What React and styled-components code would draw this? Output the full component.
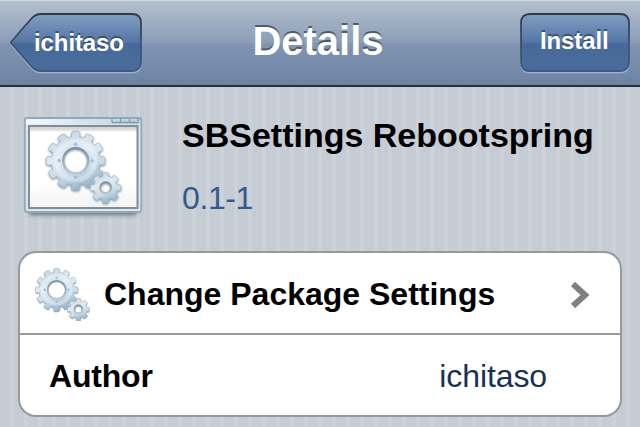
import React from 'react';
import styled, { createGlobalStyle } from 'styled-components';

const GlobalStyle = createGlobalStyle`
  * {
    box-sizing: border-box;
  }
  body {
    margin: 0;
    overflow: hidden;
    font-family: "Liberation Sans", Arial, sans-serif;
  }
`;

const Screen = styled.div`
  width: 640px;
  height: 427px;
  overflow: hidden;
  background: repeating-linear-gradient(90deg, #c5ccd4 0 10px, #cbd2d8 10px 14px);
`;

const NavBar = styled.header`
  display: flex;
  justify-content: space-between;
  align-items: flex-start;
  height: 87px;
  padding: 13px 10px 0;
  border-top: 1px solid #cdd5da;
  border-bottom: 2px solid #2d3033;
  background: linear-gradient(#b3bfcc 0, #8b9db7 42px, #8195b2 42px, #6d83a4 84px);
`;

const NavTitle = styled.h1`
  margin: 4px 28px 0 0;
  padding-left: 2px;
  font-size: 40px;
  line-height: 46px;
  color: #fff;
  text-shadow: 0 -2px 0 #4d5a6c;
`;

const NavButton = styled.button`
  position: relative;
  width: ${props => props.width};
  height: 59px;
  margin-top: -1px;
  padding: 0;
  border: 0;
  background: none;
  color: #fff;
  font: bold 24px/28px "Liberation Sans", Arial, sans-serif;
`;

const ButtonShape = styled.svg`
  position: absolute;
  inset: 0;
`;

const ButtonLabel = styled.span`
  position: relative;
  display: block;
  padding-left: ${props => props.indent};
  margin-top: ${props => props.offset};
  text-align: left;
  letter-spacing: -0.1px;
  text-shadow: 0 -2px 0 #3c526f;
`;

const PackageHeader = styled.section`
  display: flex;
  height: 164px;
  padding: 28px 0 0 20px;
`;

const PackageInfo = styled.div`
  padding-left: 32px;
`;

const PackageName = styled.h2`
  margin: 0;
  font-size: 34px;
  line-height: 40px;
  white-space: nowrap;
  color: #000;
`;

const Version = styled.p`
  margin: 25px 0 0;
  font-size: 32px;
  line-height: 36px;
  letter-spacing: -0.4px;
  color: #36598f;
`;

const List = styled.ul`
  width: 604px;
  height: 166px;
  margin: 0 0 0 18px;
  padding: 0;
  list-style: none;
  background: #fff;
  border: 2px solid #999;
  border-radius: 18px;
`;

const ListRow = styled.li`
  display: flex;
  align-items: center;
  height: ${props => props.height};
  padding: ${props => props.inset};

  & + & {
    border-top: 2px solid #999;
  }
`;

const RowLabel = styled.span`
  flex: 1;
  padding-bottom: ${props => props.lift};
  font-size: 32px;
  font-weight: bold;
  line-height: 36px;
  letter-spacing: ${props => props.spacing};
  white-space: nowrap;
`;

const RowValue = styled.span`
  font-size: 32px;
  line-height: 36px;
  letter-spacing: -0.1px;
  color: #1a3252;
`;

const RowIcon = styled.span`
  display: flex;
  width: 69px;
`;

function gearPath(cx, cy, outer, inner, hole, teeth) {
  const step = (Math.PI * 2) / teeth;
  const point = (r, a) => `${(cx + r * Math.sin(a)).toFixed(2)} ${(cy - r * Math.cos(a)).toFixed(2)}`;
  let d = '';
  for (let i = 0; i < teeth; i += 1) {
    const a = i * step;
    d += `${i ? 'L' : 'M'}${point(inner, a - step * 0.3)}`;
    d += `L${point(outer - 2, a - step * 0.3)}`;
    d += `Q${point(outer, a - step * 0.27)} ${point(outer, a - step * 0.16)}`;
    d += `L${point(outer, a + step * 0.16)}`;
    d += `Q${point(outer, a + step * 0.27)} ${point(outer - 2, a + step * 0.3)}`;
    d += `L${point(inner, a + step * 0.3)}`;
  }
  d += `ZM${cx + hole} ${cy}A${hole} ${hole} 0 1 0 ${cx - hole} ${cy}A${hole} ${hole} 0 1 0 ${cx + hole} ${cy}Z`;
  return d;
}

const BIG_GEAR = gearPath(30, 30, 29.5, 24.5, 12, 12);
const SMALL_GEAR = gearPath(60, 57, 15.3, 12, 5, 8);

function GearShapes({ id }) {
  return (
    <g>
      <defs>
        <linearGradient id={`${id}-metal`} x1="0.2" y1="0" x2="0.6" y2="1">
          <stop offset="0" stopColor="#c3d5e1" />
          <stop offset="0.4" stopColor="#e0ebf3" />
          <stop offset="0.7" stopColor="#c9dbe8" />
          <stop offset="1" stopColor="#94b0c6" />
        </linearGradient>
        <linearGradient id={`${id}-rim`} x1="0" y1="0" x2="0" y2="1">
          <stop offset="0" stopColor="#7c8f9e" />
          <stop offset="1" stopColor="#b4c8d6" />
        </linearGradient>
        <filter id={`${id}-shadow`} x="-10%" y="-10%" width="120%" height="125%">
          <feDropShadow dx="0" dy="1" stdDeviation="0.9" floodColor="#465b6c" floodOpacity="0.7" />
        </filter>
      </defs>
      <g fill={`url(#${id}-metal)`} fillRule="evenodd" stroke="#a0b6c6" strokeWidth="0.7" filter={`url(#${id}-shadow)`}>
        <path d={BIG_GEAR} />
        <path d={SMALL_GEAR} />
      </g>
      <circle cx="30" cy="30" r="19" fill="none" stroke="#f1f7fb" strokeWidth="5" opacity="0.4" />
      <circle cx="30" cy="30" r="12.6" fill="none" stroke={`url(#${id}-rim)`} strokeWidth="2.2" />
      <circle cx="60" cy="57" r="5.6" fill="none" stroke={`url(#${id}-rim)`} strokeWidth="2" />
      <g fill="#a7bfd2">
        <circle cx="30" cy="13.5" r="1.8" />
        <circle cx="46.5" cy="30" r="1.8" />
        <circle cx="30" cy="46.5" r="1.8" />
        <circle cx="13.5" cy="30" r="1.8" />
      </g>
    </g>
  );
}

function Gears() {
  return (
    <svg width="55" height="53" viewBox="0 0 76 73">
      <GearShapes id="row" />
    </svg>
  );
}

function PackageIcon() {
  return (
    <svg width="130" height="112" viewBox="0 0 130 112">
      <defs>
        <linearGradient id="pane" x1="0" y1="0" x2="0" y2="1">
          <stop offset="0" stopColor="#ced1d4" />
          <stop offset="0.05" stopColor="#dddfe1" />
          <stop offset="0.07" stopColor="#fff" />
          <stop offset="0.7" stopColor="#fff" />
          <stop offset="1" stopColor="#f2f2f3" />
        </linearGradient>
        <linearGradient id="titlebar" x1="0" y1="0" x2="1" y2="0">
          <stop offset="0" stopColor="#f4f8ff" />
          <stop offset="1" stopColor="#b7cfdf" />
        </linearGradient>
        <filter id="soft" x="-10%" y="-100%" width="120%" height="300%">
          <feGaussianBlur stdDeviation="2" />
        </filter>
      </defs>
      <rect x="9" y="92" width="108" height="8" rx="3" fill="#5c6872" opacity="0.85" filter="url(#soft)" />
      <rect x="4.8" y="3" width="116.5" height="94" rx="2.5" fill="#dbe5ed" stroke="#91a9b7" strokeWidth="1.8" />
      <rect x="6" y="4.2" width="114" height="5" fill="url(#titlebar)" />
      <path d="M92 3.5v3q0 1 1 1h24q1 0 1-1v-3M100.5 3.5v4M109.5 3.5v4" fill="none" stroke="#819eaf" strokeWidth="1.3" />
      <rect x="9" y="11" width="108.5" height="82" fill="url(#pane)" stroke="#858d92" strokeWidth="2" />
      <g transform="translate(25.7 15.8)">
        <GearShapes id="app" />
      </g>
    </svg>
  );
}

const BACK_PATH = 'M31 1H122Q131 1 131 10V49Q131 58 122 58H31Q26 58 22 54Q12 43 2 31Q0 29.5 2 28Q12 16 22 5Q26 1 31 1Z';
const INSTALL_PATH = 'M10 1H100Q109 1 109 10V49Q109 58 100 58H10Q1 58 1 49V10Q1 1 10 1Z';

function BarButton({ id, width, path, indent, offset, children }) {
  return (
    <NavButton width={`${width}px`}>
      <ButtonShape width={width} height="61" viewBox={`0 0 ${width} 61`}>
        <defs>
          <linearGradient id={`${id}-fill`} gradientUnits="userSpaceOnUse" x1="0" y1="1" x2="0" y2="58">
            <stop offset="0" stopColor="#819dc1" />
            <stop offset="0.51" stopColor="#5375a5" />
            <stop offset="0.51" stopColor="#476a9a" />
            <stop offset="1" stopColor="#4a6c9b" />
          </linearGradient>
          <linearGradient id={`${id}-edge`} x1="0" y1="0" x2="0" y2="1">
            <stop offset="0" stopColor="#303b4a" />
            <stop offset="0.5" stopColor="#3b4f6d" />
            <stop offset="1" stopColor="#3b5a88" />
          </linearGradient>
        </defs>
        <path d={path} transform="translate(0 1.6)" fill="none" stroke="#a4b3c8" strokeWidth="1.5" />
        <path d={path} fill={`url(#${id}-fill)`} stroke={`url(#${id}-edge)`} strokeWidth="1.8" />
      </ButtonShape>
      <ButtonLabel indent={indent} offset={offset}>{children}</ButtonLabel>
    </NavButton>
  );
}

export default function App() {
  return (
    <>
      <GlobalStyle />
      <Screen>
        <NavBar>
          <BarButton id="back" width={132} path={BACK_PATH} indent="24px" offset="0">
            ichitaso
          </BarButton>
          <NavTitle>Details</NavTitle>
          <BarButton id="install" width={110} path={INSTALL_PATH} indent="20px" offset="-4px">
            Install
          </BarButton>
        </NavBar>

        <PackageHeader>
          <PackageIcon />
          <PackageInfo>
            <PackageName>SBSettings Rebootspring</PackageName>
            <Version>0.1-1</Version>
          </PackageInfo>
        </PackageHeader>

        <List>
          <ListRow height="80px" inset="3px 31px 0 15px">
            <RowIcon>
              <Gears />
            </RowIcon>
            <RowLabel spacing="0" lift="1px">Change Package Settings</RowLabel>
            <svg width="19" height="28" viewBox="0 0 19 28">
              <path d="M3 3L15 14L3 25" fill="none" stroke="#808080" strokeWidth="6" />
            </svg>
          </ListRow>
          <ListRow height="82px" inset="2px 73px 0 29px">
            <RowLabel spacing="-0.2px" lift="0">Author</RowLabel>
            <RowValue>ichitaso</RowValue>
          </ListRow>
        </List>
      </Screen>
    </>
  );
}
